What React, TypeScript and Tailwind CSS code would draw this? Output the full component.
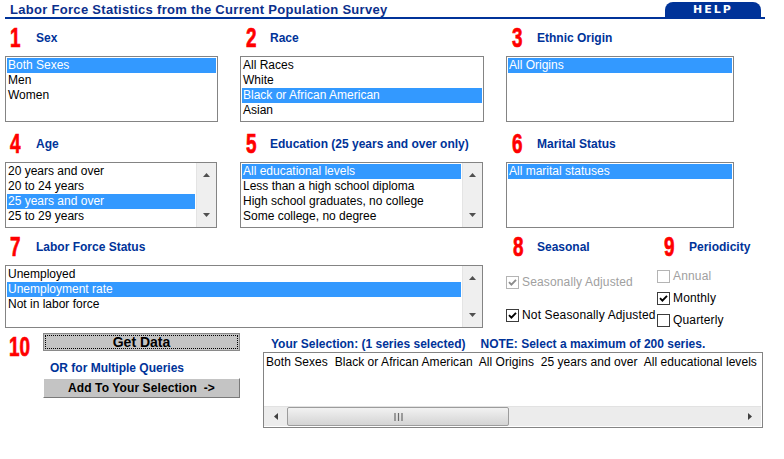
import React from "react";

function Num({ n }: { n: string }) {
  return (
    <span className="inline-block origin-left scale-x-[0.7] [font-family:'Liberation_Sans',Arial,sans-serif] font-bold text-[27px] leading-none text-[#ff0000] [-webkit-text-stroke:0.7px_#ff0000]">
      {n}
    </span>
  );
}

function SecHead({ n, label, numPad, labelLeft }: { n: string; label: string; numPad: string; labelLeft: string }) {
  return (
    <div className="h-[36px] flex items-center">
      <div className={`${numPad} ${labelLeft} flex items-center`}>
        <Num n={n} />
      </div>
      <span className="text-[12px] font-bold text-[#003399] leading-[15px] whitespace-nowrap">{label}</span>
    </div>
  );
}

function VScroll() {
  return (
    <div className="w-[20px] bg-[#efefef] border-l border-[#e4e4e4] flex flex-col items-center justify-between py-[10px]">
      <svg width="7" height="4" viewBox="0 0 7 4">
        <path d="M3.5 0 L7 4 L0 4 Z" fill="#505050" />
      </svg>
      <svg width="7" height="4" viewBox="0 0 7 4">
        <path d="M0 0 L7 0 L3.5 4 Z" fill="#505050" />
      </svg>
    </div>
  );
}

function ListBox({
  items,
  sel,
  size,
  scroll,
}: {
  items: string[];
  sel: number;
  size: string;
  scroll?: boolean;
}) {
  return (
    <div className={`${size} border border-[#848484] bg-white flex overflow-hidden`}>
      <div className="flex-1 p-[1px] min-w-0">
        {items.map((it, i) => (
          <div
            key={i}
            className={`h-[15px] leading-[15px] pl-[1px] text-[12px] whitespace-nowrap ${
              i === sel ? "bg-[#3399ff] text-white" : "text-black"
            }`}
          >
            {it}
          </div>
        ))}
      </div>
      {scroll && <VScroll />}
    </div>
  );
}

function Check({ checked, disabled }: { checked?: boolean; disabled?: boolean }) {
  return (
    <span
      className={`w-[13px] h-[13px] shrink-0 border bg-white flex items-center justify-center ${
        disabled ? "border-[#b4b4b4]" : "border-[#3c3c3c]"
      }`}
    >
      {checked && (
        <svg width="9" height="9" viewBox="0 0 9 9">
          <path
            d="M1 4.2 L3.4 6.6 L8 1.8"
            stroke={disabled ? "#8c8c8c" : "#000"}
            strokeWidth="1.9"
            fill="none"
          />
        </svg>
      )}
    </span>
  );
}

function CheckRow({ label, checked, disabled, mt }: { label: string; checked?: boolean; disabled?: boolean; mt: string }) {
  return (
    <div className={`${mt} h-[13px] flex items-center gap-[3px]`}>
      <Check checked={checked} disabled={disabled} />
      <span className={`text-[12px] leading-[15px] whitespace-nowrap tracking-[0.15px] ${disabled ? "text-[#a0a0a0]" : "text-black"}`}>
        {label}
      </span>
    </div>
  );
}

export default function App() {
  return (
    <div className="w-[784px] h-[459px] bg-white overflow-hidden [font-family:'Liberation_Sans',Arial,sans-serif]">
      {/* Header */}
      <div className="pl-[5px] pr-[19px] pt-[2px]">
        <div className="flex items-end justify-between border-b-2 border-[#003399] h-[17px]">
          <div className="pl-[5px] text-[13px] font-bold text-[#0b2f8c] tracking-[0.3px] leading-[15px] whitespace-nowrap">
            Labor Force Statistics from the Current Population Survey
          </div>
          <div className="w-[96px] h-[15px] mr-[4px] bg-[#003399] rounded-t-[8px] flex items-center justify-center">
            <span className="text-white text-[11px] font-bold tracking-[2px] leading-none [font-family:'DejaVu_Sans',sans-serif]">
              HELP
            </span>
          </div>
        </div>
      </div>

      {/* Rows 1-2 */}
      <div className="pl-[5px] mt-[1px] grid grid-cols-[235px_266px_1fr]">
        <div>
          <SecHead n="1" label="Sex" numPad="pl-[5px]" labelLeft="w-[31px]" />
          <ListBox items={["Both Sexes", "Men", "Women"]} sel={0} size="w-[213px] h-[66px]" />
        </div>
        <div>
          <SecHead n="2" label="Race" numPad="pl-[6px]" labelLeft="w-[30px]" />
          <ListBox
            items={["All Races", "White", "Black or African American", "Asian"]}
            sel={2}
            size="w-[244px] h-[66px]"
          />
        </div>
        <div>
          <SecHead n="3" label="Ethnic Origin" numPad="pl-[6px]" labelLeft="w-[31px]" />
          <ListBox items={["All Origins"]} sel={0} size="w-[228px] h-[66px]" />
        </div>

        <div className="mt-[4px]">
          <SecHead n="4" label="Age" numPad="pl-[5px]" labelLeft="w-[31px]" />
          <ListBox
            items={["20 years and over", "20 to 24 years", "25 years and over", "25 to 29 years"]}
            sel={2}
            size="w-[212px] h-[66px]"
            scroll
          />
        </div>
        <div className="mt-[4px]">
          <SecHead n="5" label="Education (25 years and over only)" numPad="pl-[6px]" labelLeft="w-[30px]" />
          <ListBox
            items={[
              "All educational levels",
              "Less than a high school diploma",
              "High school graduates, no college",
              "Some college, no degree",
            ]}
            sel={0}
            size="w-[243px] h-[66px]"
            scroll
          />
        </div>
        <div className="mt-[4px]">
          <SecHead n="6" label="Marital Status" numPad="pl-[6px]" labelLeft="w-[31px]" />
          <ListBox items={["All marital statuses"]} sel={0} size="w-[228px] h-[66px]" />
        </div>
      </div>

      {/* Row 3 */}
      <div className="mt-[1px] flex">
        <div className="w-[506px] pl-[5px]">
          <SecHead n="7" label="Labor Force Status" numPad="pl-[5px]" labelLeft="w-[31px]" />
          <ListBox
            items={["Unemployed", "Unemployment rate", "Not in labor force"]}
            sel={1}
            size="w-[478px] h-[63px]"
            scroll
          />
        </div>
        <div className="w-[151px]">
          <SecHead n="8" label="Seasonal" numPad="pl-[7px]" labelLeft="w-[31px]" />
          <CheckRow mt="mt-[11px]" label="Seasonally Adjusted" checked disabled />
          <CheckRow mt="mt-[20px]" label="Not Seasonally Adjusted" checked />
        </div>
        <div className="flex-1">
          <SecHead n="9" label="Periodicity" numPad="pl-[7px]" labelLeft="w-[32px]" />
          <CheckRow mt="mt-[5px]" label="Annual" disabled />
          <CheckRow mt="mt-[9px]" label="Monthly" checked />
          <CheckRow mt="mt-[9px]" label="Quarterly" />
        </div>
      </div>

      {/* Row 4 */}
      <div className="flex">
        <div className="w-[263px] flex">
          <div className="w-[43px] pl-[9px] pt-[6px]">
            <Num n="10" />
          </div>
          <div className="w-[197px] pt-[5px]">
            <div className="h-[18px] bg-[#c4c4c4] border border-[#8a8a8a] p-[1px]">
              <div className="h-full border border-dotted border-black flex items-center justify-center">
                <span className="text-[14px] font-bold text-black leading-none">Get Data</span>
              </div>
            </div>
            <div className="mt-[10px] pl-[7px] h-[15px] leading-[15px] text-[12px] font-bold text-[#003399]">
              OR for Multiple Queries
            </div>
            <div className="mt-[2px] h-[20px] bg-[#c4c4c4] border border-t-white border-l-white border-r-[#7a7a7a] border-b-[#7a7a7a] flex items-center justify-center">
              <span className="text-[12px] font-bold text-black leading-none whitespace-pre tracking-[0.1px]">Add To Your Selection  -&gt;</span>
            </div>
          </div>
        </div>
        <div className="w-[500px]">
          <div className="mt-[9px] pl-[8px] h-[15px] flex gap-[15px] text-[12px] font-bold text-[#003399] leading-[15px] whitespace-nowrap">
            <span>Your Selection: (1 series selected)</span>
            <span>NOTE: Select a maximum of 200 series.</span>
          </div>
          <div className="h-[76px] border border-[#848484] bg-white flex flex-col">
            <div className="flex-1 pl-[2px] pt-[2px] text-[12px] leading-[15px] text-black whitespace-pre overflow-hidden tracking-[0.05px]">
              Both Sexes  Black or African American  All Origins  25 years and over  All educational levels
            </div>
            <div className="h-[20px] mr-[1px] mb-[1px] bg-[#ececec] border-t border-[#e2e2e2] flex items-center">
              <div className="w-[23px] flex items-center justify-center">
                <svg width="4" height="7" viewBox="0 0 4 7">
                  <path d="M4 0 L0 3.5 L4 7 Z" fill="#404040" />
                </svg>
              </div>
              <div className="w-[222px] h-[19px] border border-[#9c9c9c] rounded-[2px] bg-gradient-to-b from-[#f2f2f2] to-[#d4d4d4] flex items-center justify-center">
                <svg width="9" height="8" viewBox="0 0 9 8">
                  <path d="M1 0 V8 M4.5 0 V8 M8 0 V8" stroke="#6a6a6a" strokeWidth="1.2" />
                </svg>
              </div>
              <div className="flex-1" />
              <div className="w-[22px] flex items-center justify-center">
                <svg width="4" height="7" viewBox="0 0 4 7">
                  <path d="M0 0 L4 3.5 L0 7 Z" fill="#404040" />
                </svg>
              </div>
            </div>
          </div>
        </div>
      </div>
    </div>
  );
}
